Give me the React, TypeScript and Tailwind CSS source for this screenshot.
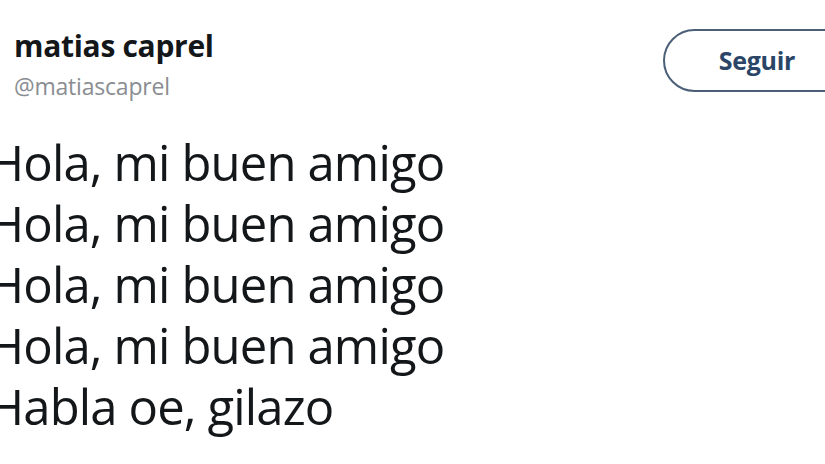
export default function App() {
  return (
    <div className="w-[825px] h-[464px] overflow-hidden bg-white" style={{ fontFamily: '"Open Sans", "Noto Sans", sans-serif' }}>
      <div className="flex items-start justify-between pt-[29px]">
        <div className="flex flex-col pl-[14px]">
          <div className="text-[30px] leading-[34px] font-bold text-[#14171a] tracking-[-0.3px]">matias caprel</div>
          <div className="text-[23px] leading-[28px] text-[#8a8d91] mt-[9px] tracking-[-0.2px]">@matiascaprel</div>
        </div>
        <div className="flex items-center justify-center w-[200px] h-[63px] -mr-[38px] rounded-full border-2 border-[#4b5f76]">
          <span className="text-[25px] font-bold text-[#2b4566] pr-[12px] tracking-[-0.3px]">Seguir</span>
        </div>
      </div>
      <div className="-ml-[12px] mt-[32px] flex flex-col text-[#14171a] text-[49px] leading-[61px] tracking-[-0.85px]">
        <div>Hola, mi buen amigo</div>
        <div>Hola, mi buen amigo</div>
        <div>Hola, mi buen amigo</div>
        <div>Hola, mi buen amigo</div>
        <div>Habla oe, gilazo</div>
      </div>
    </div>
  );
}
